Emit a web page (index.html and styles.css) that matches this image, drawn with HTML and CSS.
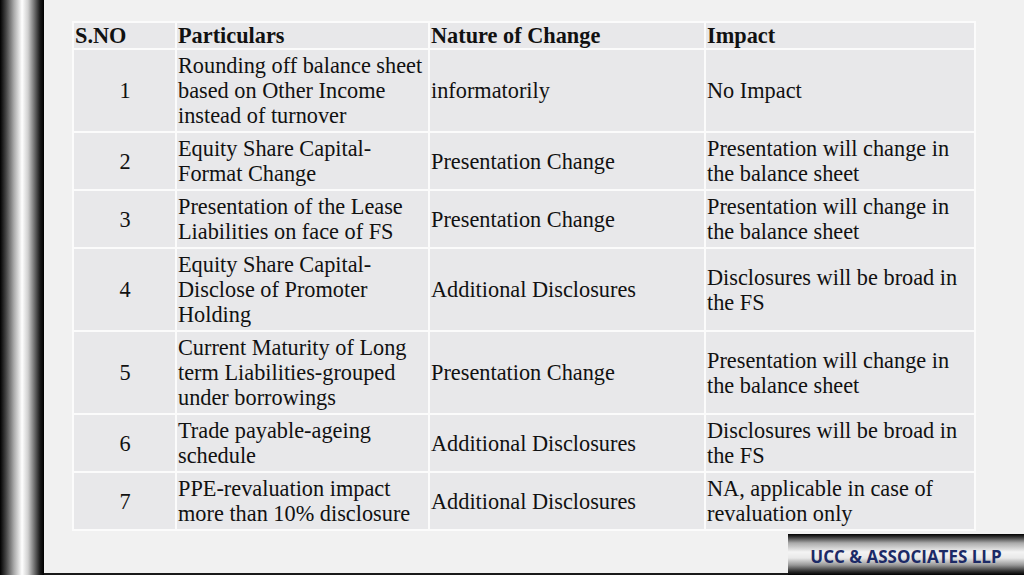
FILE: index.html
```html
<!DOCTYPE html>
<html>
<head>
<meta charset="utf-8">
<link rel="stylesheet" href="styles.css">
</head>
<body>
<div class="slide">
  <div class="sidebar"></div>
  <div class="main">
    <table class="grid">
      <colgroup>
        <col class="c1"><col class="c2"><col class="c3"><col class="c4">
      </colgroup>
      <thead>
        <tr><th>S.NO</th><th>Particulars</th><th>Nature of Change</th><th>Impact</th></tr>
      </thead>
      <tbody>
        <tr><td class="num">1</td><td>Rounding off balance sheet based on Other Income instead of turnover</td><td>informatorily</td><td>No Impact</td></tr>
        <tr><td class="num">2</td><td>Equity Share Capital-<br>Format Change</td><td>Presentation Change</td><td>Presentation will change in the balance sheet</td></tr>
        <tr><td class="num">3</td><td>Presentation of the Lease Liabilities on face of FS</td><td>Presentation Change</td><td>Presentation will change in the balance sheet</td></tr>
        <tr><td class="num">4</td><td>Equity Share Capital-<br>Disclose of Promoter Holding</td><td>Additional Disclosures</td><td>Disclosures will be broad in the FS</td></tr>
        <tr><td class="num">5</td><td>Current Maturity of Long term Liabilities-grouped under borrowings</td><td>Presentation Change</td><td>Presentation will change in the balance sheet</td></tr>
        <tr><td class="num">6</td><td>Trade payable-ageing schedule</td><td>Additional Disclosures</td><td>Disclosures will be broad in the FS</td></tr>
        <tr><td class="num">7</td><td>PPE-revaluation impact more than 10% disclosure</td><td>Additional Disclosures</td><td>NA, applicable in case of revaluation only</td></tr>
      </tbody>
    </table>
    <div class="footer">
      <div class="logo">UCC &amp; ASSOCIATES LLP</div>
    </div>
  </div>
</div>
</body>
</html>
```

FILE: styles.css
```css
html, body {
  margin: 0;
  padding: 0;
}
body {
  width: 1024px;
  height: 575px;
  overflow: hidden;
  background: #f1f1f1;
  font-family: "Liberation Serif", "Times New Roman", serif;
  color: #111;
}
.slide {
  display: flex;
  width: 1024px;
  height: 575px;
}
.sidebar {
  width: 44px;
  flex: none;
  background: linear-gradient(to right, #000 0px, #444 6px, #aaa 14px, #fff 22px, #d0d0d0 28px, #666 35px, #1a1a1a 40px, #000 44px);
}
.main {
  flex: 1;
  display: flex;
  flex-direction: column;
  padding: 21px 0 0 28px;
  box-sizing: border-box;
  border-bottom: 2px solid #1a1a1a;
}
.grid {
  border-collapse: collapse;
  width: 902px;
  table-layout: fixed;
  font-size: 22.3px;
  line-height: 25px;
}
.c1 { width: 103px; }
.c2 { width: 253px; }
.c3 { width: 276px; }
.c4 { width: 270px; }
.grid th, .grid td {
  border: 2px solid #fbfbfb;
  background: #e8e8ea;
  text-align: left;
  vertical-align: middle;
  padding: 3px 0 3px 1px;
  font-weight: normal;
}
.grid th {
  font-weight: bold;
  padding: 0 0 0 1px;
}
.grid td.num {
  text-align: center;
}
.footer {
  margin-top: auto;
  display: flex;
  justify-content: flex-end;
}
.logo {
  width: 236px;
  height: 41px;
  margin-bottom: -2px;
  padding-top: 3px;
  box-sizing: border-box;
  display: flex;
  align-items: center;
  justify-content: center;
  font-family: "Open Sans", "Liberation Sans", sans-serif;
  font-weight: bold;
  font-size: 17px;
  color: #1c2a66;
  background: linear-gradient(to bottom, #000 0px, #333 3px, #aaa 9px, #f4f4f4 18px, #e8e8e8 24px, #999 31px, #333 37px, #000 41px);
}
```
